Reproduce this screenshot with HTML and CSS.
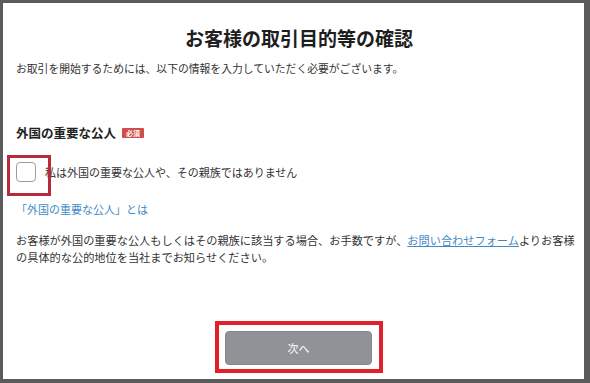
FILE: index.html
```html
<!DOCTYPE html>
<html lang="ja">
<head>
  <meta charset="UTF-8" />
  <meta name="viewport" content="width=device-width, initial-scale=1.0">
  <title>お客様の取引目的等の確認</title>
  <link rel="stylesheet" href="styles.css">
</head>
<body>

  <div class="page">
    <h1>お客様の取引目的等の確認</h1>
    <p class="lead">お取引を開始するためには、以下の情報を入力していただく必要がございます。</p>

    <div class="field-title">
      外国の重要な公人 <span class="badge">必須</span>
    </div>

    <label class="check-row">
      <span class="check-wrap">
        <input type="checkbox" class="check">
        <span class="mark"></span>
      </span>
      <span class="check-text">私は外国の重要な公人や、その親族ではありません</span>
    </label>

    <a class="help-link" href="#">「外国の重要な公人」とは</a>

    <p class="note">お客様が外国の重要な公人もしくはその親族に該当する場合、お手数ですが、<a href="#">お問い合わせフォーム</a>よりお客様<br>の具体的な公的地位を当社までお知らせください。</p>

    <div class="actions">
      <div class="highlight">
        <button type="button" class="next">次へ</button>
      </div>
    </div>
  </div>

</body>
</html>
```

FILE: styles.css
```css
* {
  box-sizing: border-box;
}
body {
  margin: 0;
  background: #5b5b5b;
  font-family: "Noto Sans CJK JP", "Noto Sans", sans-serif;
  color: #222;
}

.page {
  margin: 3px 6px 4px 3px;
  height: 376px;
  background: #fff;
  padding: 22px 2px 0 13px;
  display: flex;
  flex-direction: column;
}

h1 {
  margin: 0;
  font-size: 19px;
  line-height: 26px;
  font-weight: bold;
  text-align: center;
  color: #1e1e1e;
}

.lead {
  margin: 9px 0 0;
  font-size: 10.8px;
  line-height: 16px;
  color: #333;
}

.field-title {
  margin-top: 48px;
  font-size: 12.5px;
  line-height: 18px;
  font-weight: bold;
  display: flex;
  align-items: center;
  gap: 6px;
}

.badge {
  background: #d04e4a;
  color: #fff;
  font-size: 7px;
  line-height: 10px;
  padding: 0 4px;
  border-radius: 1px;
  font-weight: bold;
}

.check-row {
  margin-top: 20px;
  display: flex;
  align-items: center;
  gap: 9px;
  font-size: 11px;
  line-height: 16px;
  color: #333;
}

.check-wrap {
  position: relative;
  width: 20px;
  height: 20px;
  flex-shrink: 0;
}
.check {
  display: none;
}
.mark {
  display: block;
  width: 20px;
  height: 20px;
  border: 1px solid #9c9c9c;
  border-radius: 4px;
  background: #fff;
}
/* annotation frame over the checkbox */
.check-wrap::after {
  content: "";
  position: absolute;
  left: -9px;
  top: -7px;
  width: 38px;
  height: 35px;
  border: 3px solid #b52b3a;
}

.help-link {
  margin-top: 19px;
  font-size: 11px;
  line-height: 16px;
  color: #3f8ac6;
  text-decoration: none;
}

.note {
  margin: 15px 0 0;
  font-size: 11.2px;
  line-height: 17px;
  color: #333;
}
.note a {
  color: #3f8ac6;
  text-decoration: underline;
}

.actions {
  margin-top: 55px;
  display: flex;
  justify-content: center;
}

.highlight {
  border: 4px solid #e3202a;
  padding: 6px 7px 4px 6px;
}

.next {
  width: 147px;
  height: 34px;
  background: #8f9297;
  border: 1px solid #85888d;
  border-radius: 4px;
  color: #fff;
  font-family: inherit;
  font-size: 11px;
  display: block;
}
```
